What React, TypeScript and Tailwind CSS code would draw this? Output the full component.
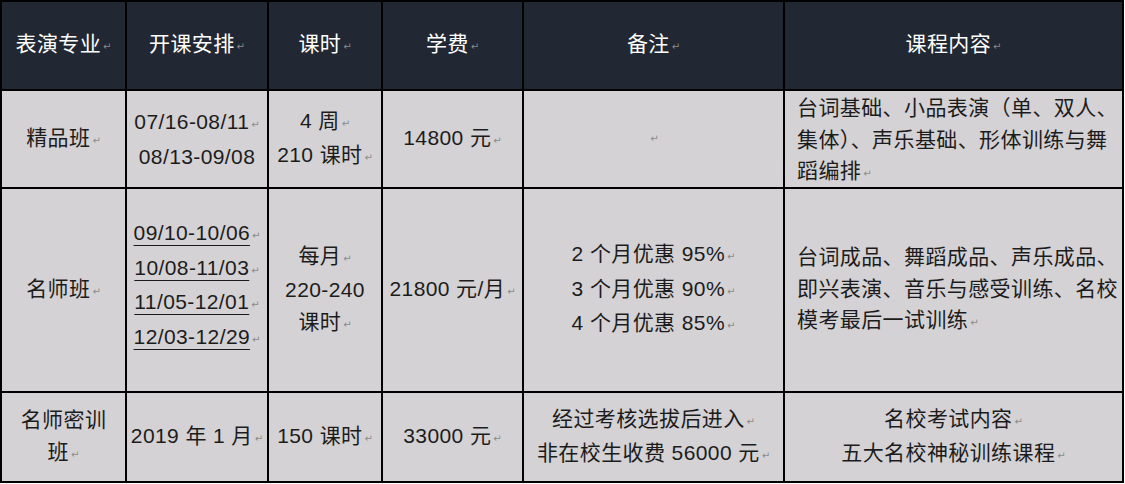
import React from "react";

const Mark = () => (
  <span className="ml-[2px] align-[1px] font-['DejaVu_Sans',sans-serif] text-[10px] tracking-normal text-[#8a8a8a]">↵</span>
);

const Line: React.FC<{ children: React.ReactNode; mark?: boolean; u?: boolean }> = ({ children, mark = true, u }) => (
  <div className="whitespace-nowrap">
    <span className={u ? "underline decoration-1 underline-offset-[5px]" : ""}>{children}</span>
    {mark && <Mark />}
  </div>
);

const Head: React.FC<{ children: React.ReactNode }> = ({ children }) => (
  <div className="flex items-center justify-center bg-[#222833] text-white">
    <Line>{children}</Line>
  </div>
);

const Cell: React.FC<{ children: React.ReactNode; className?: string }> = ({ children, className = "" }) => (
  <div className={`flex flex-col items-center justify-center bg-[#d4d2d4] text-[#1c1c1c] ${className}`}>{children}</div>
);

export default function App() {
  return (
    <div className="h-[484px] w-[1125px] bg-white font-['Liberation_Sans','Noto_Sans_CJK_SC',sans-serif] text-[21px] leading-[31.5px] tracking-[0.4px]">
      <div className="grid w-fit grid-cols-[123px_140px_112px_139px_259px_337px] grid-rows-[87px_96px_202px_88px] gap-[2px] bg-black p-[2px]">
        <Head>表演专业</Head>
        <Head>开课安排</Head>
        <Head>课时</Head>
        <Head>学费</Head>
        <Head>备注</Head>
        <Head>课程内容</Head>

        <Cell>
          <Line>精品班</Line>
        </Cell>
        <Cell>
          <Line>07/16-08/11</Line>
          <Line mark={false}>08/13-09/08</Line>
        </Cell>
        <Cell>
          <Line>4 周</Line>
          <Line>210 课时</Line>
        </Cell>
        <Cell>
          <Line>14800 元</Line>
        </Cell>
        <Cell>
          <Mark />
        </Cell>
        <Cell className="!items-start !justify-start pl-[12px] pt-[1px]">
          <Line mark={false}>台词基础、小品表演（单、双人、</Line>
          <Line mark={false}>集体）、声乐基础、形体训练与舞</Line>
          <Line>蹈编排</Line>
        </Cell>

        <Cell>
          <Line>名师班</Line>
        </Cell>
        <Cell className="pb-[8px]">
          <Line u>09/10-10/06</Line>
          <Line u>10/08-11/03</Line>
          <Line u>11/05-12/01</Line>
          <Line u>12/03-12/29</Line>
        </Cell>
        <Cell>
          <Line>每月</Line>
          <Line mark={false}>220-240</Line>
          <Line>课时</Line>
        </Cell>
        <Cell>
          <Line>21800 元/月</Line>
        </Cell>
        <Cell>
          <Line>2 个月优惠 95%</Line>
          <Line>3 个月优惠 90%</Line>
          <Line>4 个月优惠 85%</Line>
        </Cell>
        <Cell className="!items-start pl-[12px]">
          <Line mark={false}>台词成品、舞蹈成品、声乐成品、</Line>
          <Line mark={false}>即兴表演、音乐与感受训练、名校</Line>
          <Line>模考最后一试训练</Line>
        </Cell>

        <Cell>
          <Line mark={false}>名师密训</Line>
          <Line>班</Line>
        </Cell>
        <Cell>
          <Line>2019 年 1 月</Line>
        </Cell>
        <Cell>
          <Line>150 课时</Line>
        </Cell>
        <Cell>
          <Line>33000 元</Line>
        </Cell>
        <Cell>
          <Line>经过考核选拔后进入</Line>
          <Line>非在校生收费 56000 元</Line>
        </Cell>
        <Cell>
          <Line>名校考试内容</Line>
          <Line>五大名校神秘训练课程</Line>
        </Cell>
      </div>
    </div>
  );
}
